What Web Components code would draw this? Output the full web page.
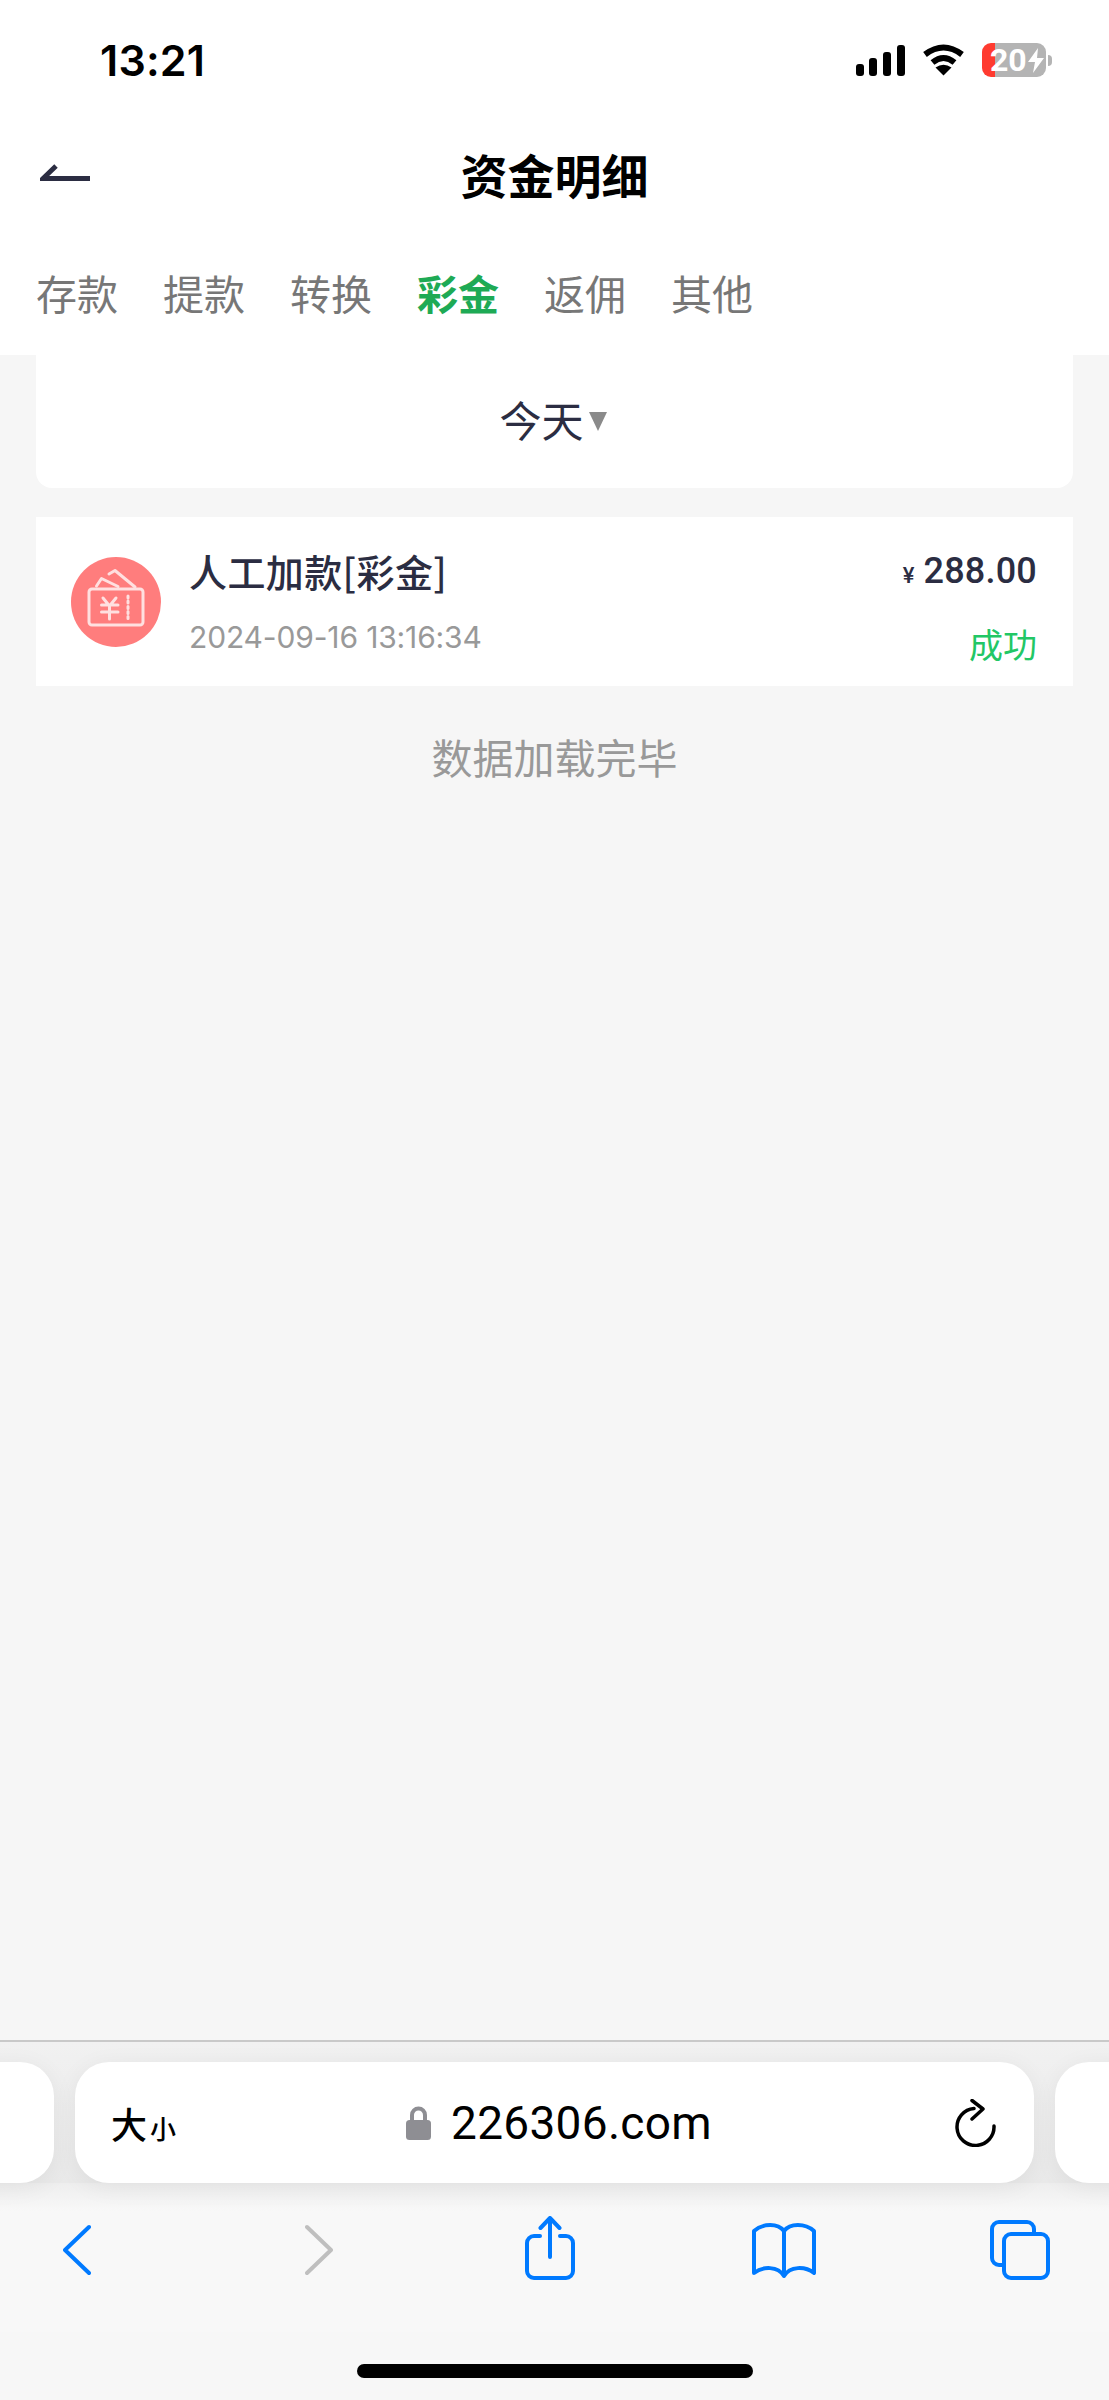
<!DOCTYPE html>
<html lang="zh">
<head>
<meta charset="utf-8">
<title>资金明细</title>
<style>
  html, body { margin: 0; padding: 0; }
  body {
    width: 1109px;
    height: 2400px;
    display: flex;
    flex-direction: column;
    overflow: hidden;
    background: #f6f6f6;
    font-family: Inter, "Noto Sans CJK SC", sans-serif;
  }
  main-list { flex: 1; }
</style>
</head>
<body>
  <status-bar time="13:21" battery="20"></status-bar>
  <nav-header>资金明细</nav-header>
  <tab-strip active="3" items="存款,提款,转换,彩金,返佣,其他"></tab-strip>
  <main-list>
    <date-filter>今天</date-filter>
    <txn-row title="人工加款[彩金]" date="2024-09-16 13:16:34" amount="288.00" state="成功"></txn-row>
    <end-note>数据加载完毕</end-note>
  </main-list>
  <safari-bar host-name="226306.com"></safari-bar>

<script>
class StatusBar extends HTMLElement {
  connectedCallback() {
    this.attachShadow({ mode: "open" });
    this.shadowRoot.innerHTML = /*html*/ `
      <style>
        :host { display: flex; align-items: center; height: 120px; background: #fff; color: #000; }
        .time { margin-left: 100px; font: 600 43px/1 Inter, sans-serif; letter-spacing: 0.2px; }
        .right { margin-left: auto; margin-right: 57px; display: flex; align-items: center; }
        svg { display: block; }
        .wifi { margin-left: 17px; }
        .battery {
          margin-left: 17px; width: 64px; height: 34px; border-radius: 9px;
          display: flex; align-items: center; color: #fff;
          background: linear-gradient(90deg, #ff3b30 0 13px, #b4b4b4 13px);
          font: 700 32px/34px Roboto, sans-serif;
        }
        .battery span { margin-left: 8px; }
        .nub { width: 4px; height: 11px; margin-left: 2px; background: #b4b4b4; border-radius: 0 4px 4px 0; }
      </style>
      <div class="time">${this.getAttribute("time")}</div>
      <div class="right">
        <svg width="50" height="31" viewBox="0 0 50 31" fill="#000">
          <rect x="1" y="19" width="8" height="12" rx="3"/>
          <rect x="14" y="13" width="8" height="18" rx="3"/>
          <rect x="28" y="7" width="8" height="24" rx="3"/>
          <rect x="42" y="0" width="8" height="31" rx="3"/>
        </svg>
        <svg class="wifi" width="43" height="32" viewBox="0 0 43 32">
          <path d="M3 10.500Q21.500 -3.500 40 10.500M10.500 18.500Q21.500 9.500 32.500 18.500" fill="none" stroke="#000" stroke-width="6"/>
          <path d="M21.500 31.500L13.500 23.500Q21.500 18 29.500 23.500Z" fill="#000"/>
        </svg>
        <div class="battery">
          <span>${this.getAttribute("battery")}</span>
          <svg width="16" height="25" viewBox="0 0 16 25" style="margin-left:1px"><path d="M10 0L0 14H7L5 25L16 10H9Z" fill="#fff"/></svg>
        </div>
        <div class="nub"></div>
      </div>
    `;
  }
}

class NavHeader extends HTMLElement {
  connectedCallback() {
    this.attachShadow({ mode: "open" });
    this.shadowRoot.innerHTML = /*html*/ `
      <style>
        :host {
          display: grid; grid-template-columns: 1fr auto 1fr; align-items: center;
          height: 112px; box-sizing: border-box; padding-bottom: 6px; background: #fff;
        }
        .title { font: 700 47px/1 "Noto Sans CJK SC", sans-serif; color: #000; }
        svg { display: block; margin: 2px 0 0 40px; }
      </style>
      <svg width="52" height="20" viewBox="0 0 52 20">
        <path d="M16 2L3 14.500H50" fill="none" stroke="#2b2d42" stroke-width="5"/>
      </svg>
      <div class="title"><slot></slot></div>
      <div></div>
    `;
  }
}

class TabStrip extends HTMLElement {
  connectedCallback() {
    this.attachShadow({ mode: "open" });
    const active = Number(this.getAttribute("active"));
    const tabs = this.getAttribute("items").split(",")
      .map((t, i) => `<div class="tab ${i === active ? "on" : ""}">${t}</div>`).join("");
    this.shadowRoot.innerHTML = /*html*/ `
      <style>
        :host {
          display: flex; align-items: center; gap: 45px; height: 123px; box-sizing: border-box;
          padding: 0 0 3px 36px; background: #fff;
        }
        .tab { font: 400 41px/1 "Noto Sans CJK SC", sans-serif; color: #777; }
        .on { color: #1eaa55; font-weight: 700; }
      </style>
      ${tabs}
    `;
  }
}

class MainList extends HTMLElement {
  connectedCallback() {
    this.attachShadow({ mode: "open" });
    this.shadowRoot.innerHTML = /*html*/ `
      <style>
        :host { display: block; }
      </style>
      <slot></slot>
    `;
  }
}

class DateFilter extends HTMLElement {
  connectedCallback() {
    this.attachShadow({ mode: "open" });
    this.shadowRoot.innerHTML = /*html*/ `
      <style>
        :host {
          display: flex; align-items: center; justify-content: center; gap: 5px;
          height: 133px; box-sizing: border-box; padding: 0 3px 6px 0; margin: 0 36px;
          background: #fff; border-radius: 0 0 16px 16px;
          font: 400 42px/1 "Noto Sans CJK SC", sans-serif; color: #2b2d42;
        }
        svg { display: block; margin-top: 6px; }
      </style>
      <slot></slot>
      <svg width="18" height="19" viewBox="0 0 18 19"><path d="M0 0H18L9 19Z" fill="#8a8a8a"/></svg>
    `;
  }
}

class TxnRow extends HTMLElement {
  connectedCallback() {
    this.attachShadow({ mode: "open" });
    this.shadowRoot.innerHTML = /*html*/ `
      <style>
        :host {
          display: flex; align-items: center; height: 169px; margin: 29px 36px 0; padding: 0 36px 0 35px;
          background: #fff; font-family: "Noto Sans CJK SC", sans-serif;
        }
        svg.icon { display: block; flex: none; margin-right: 28px; }
        .left { flex: 1; padding-bottom: 3px; }
        .title { font-size: 38px; line-height: 50px; font-weight: 500; color: #2b2d42; letter-spacing: 0.4px; }
        .date { margin-top: 24px; font: 400 30px/34px Inter, sans-serif; color: #999; letter-spacing: -0.15px; }
        .right { text-align: right; padding-top: 11px; }
        .amount { font: 500 36px/40px Roboto, sans-serif; color: #2b2d42; letter-spacing: 0.2px; }
        .amount small { font-size: 22px; margin-right: 9px; letter-spacing: 0; }
        .state { margin-top: 28px; font-size: 34px; line-height: 40px; color: #22c765; }
      </style>
      <svg class="icon" width="90" height="90" viewBox="0 0 90 90">
        <circle cx="45" cy="45" r="45" fill="#ff7d7d"/>
        <g fill="none" stroke="#ffe0e0" stroke-width="3" stroke-linecap="round" stroke-linejoin="round">
          <rect x="18" y="32" width="54" height="36" rx="3"/>
          <path d="M25.500 29L30.500 21.500L47 29.500M38 17L44 13.500L64 30"/>
          <path d="M32 41L38.500 49L45 41M30.500 48H47M30.500 55H47M38.500 49V62"/>
          <path d="M57 39V41M57 44V46M57 49.500V51.500M57 54.500V56.500M57 59.500V61.500"/>
        </g>
      </svg>
      <div class="left">
        <div class="title">${this.getAttribute("title")}</div>
        <div class="date">${this.getAttribute("date")}</div>
      </div>
      <div class="right">
        <div class="amount"><small>¥</small>${this.getAttribute("amount")}</div>
        <div class="state">${this.getAttribute("state")}</div>
      </div>
    `;
  }
}

class EndNote extends HTMLElement {
  connectedCallback() {
    this.attachShadow({ mode: "open" });
    this.shadowRoot.innerHTML = /*html*/ `
      <style>
        :host {
          display: block; margin-top: 42px; text-align: center;
          font: 400 41px/56px "Noto Sans CJK SC", sans-serif; color: #999;
        }
      </style>
      <slot></slot>
    `;
  }
}

class SafariBar extends HTMLElement {
  connectedCallback() {
    this.attachShadow({ mode: "open" });
    this.shadowRoot.innerHTML = /*html*/ `
      <style>
        :host {
          display: block; height: 360px; box-sizing: border-box; overflow: hidden;
          border-top: 2px solid #c9c9c9; background: #f7f7f7; color: #000;
        }
        .pills { display: flex; justify-content: center; gap: 21px; padding-top: 20px; height: 121px; background: linear-gradient(#f1f1f1, #e9e9e9); }
        .pill { flex: none; width: 200px; height: 121px; background: #fff; border-radius: 34px; box-shadow: 0 4px 24px rgba(0,0,0,.06); }
        .url { width: 959px; display: flex; align-items: center; padding: 0 38px 0 36px; box-sizing: border-box; }
        .size { display: flex; align-items: flex-end; width: 120px; font-family: "Noto Sans CJK SC", sans-serif; line-height: 1; }
        .size b { font-size: 36px; font-weight: 500; }
        .size i { font-style: normal; font-size: 26px; font-weight: 500; margin-left: 3px; }
        .host { flex: 1; display: flex; align-items: center; gap: 20px; margin-left: 175px; font: 400 46px/1 Roboto, sans-serif; letter-spacing: 0.3px; }
        .tools {
          display: flex; padding: 33px 0 0 63px; height: 116px;
          background: linear-gradient(#eeeeee, #f8f8f8 28px);
        }
        .tools svg { display: block; flex: none; }
        .home { width: 396px; height: 14px; margin: 32px auto 0; border-radius: 7px; background: #000; }
      </style>
      <div class="pills">
        <div class="pill"></div>
        <div class="pill url">
          <div class="size"><b>大</b><i>小</i></div>
          <div class="host">
            <svg width="25" height="34" viewBox="0 0 25 34"><path d="M6 15V9a6.500 6.500 0 0 1 13 0v6" fill="none" stroke="#8e8e93" stroke-width="4"/><rect y="14" width="25" height="20" rx="3.500" fill="#8e8e93"/></svg>
            <span>${this.getAttribute("host-name")}</span>
          </div>
          <svg width="41" height="48" viewBox="0 0 41 48" fill="none" stroke="#000" stroke-width="3.500" stroke-linecap="round" stroke-linejoin="round">
            <path d="M19 9.500A18.500 18.500 0 1 0 39 27"/>
            <path d="M17 1.500L28 10L17 20"/>
          </svg>
        </div>
        <div class="pill"></div>
      </div>
      <div class="tools">
        <svg width="28" height="70" viewBox="0 0 28 70" fill="none" stroke="#007aff" stroke-width="4" stroke-linecap="round" stroke-linejoin="round"><path d="M26 11L2 34L26 57"/></svg>
        <svg style="margin-left:214px" width="28" height="70" viewBox="0 0 28 70" fill="none" stroke="#bfbfbf" stroke-width="4" stroke-linecap="round" stroke-linejoin="round"><path d="M2 11L26 34L2 57"/></svg>
        <svg style="margin-left:192px" width="50" height="70" viewBox="0 0 50 70" fill="none" stroke="#007aff" stroke-width="4" stroke-linecap="round" stroke-linejoin="round">
          <path d="M15 20H9a7 7 0 0 0-7 7V55a7 7 0 0 0 7 7H41a7 7 0 0 0 7-7V27a7 7 0 0 0-7-7H35"/>
          <path d="M25 41V2M15.500 12L25 2L34.500 12"/>
        </svg>
        <svg style="margin-left:177px" width="64" height="70" viewBox="0 0 64 70" fill="none" stroke="#007aff" stroke-width="4" stroke-linecap="round" stroke-linejoin="round">
          <path d="M32 15C26 7 11 7 2 15V57C11 50 26 50 32 60C38 50 53 50 62 57V15C53 7 38 7 32 15V60"/>
        </svg>
        <svg style="margin-left:174px" width="60" height="70" viewBox="0 0 60 70" fill="none" stroke="#007aff" stroke-width="4" stroke-linejoin="round">
          <path d="M44 17V13a7 7 0 0 0-7-7H9a7 7 0 0 0-7 7V42a7 7 0 0 0 7 7H14"/>
          <rect x="14" y="18" width="44" height="44" rx="7"/>
        </svg>
      </div>
      <div class="home"></div>
    `;
  }
}

customElements.define("status-bar", StatusBar);
customElements.define("nav-header", NavHeader);
customElements.define("tab-strip", TabStrip);
customElements.define("main-list", MainList);
customElements.define("date-filter", DateFilter);
customElements.define("txn-row", TxnRow);
customElements.define("end-note", EndNote);
customElements.define("safari-bar", SafariBar);
</script>
</body>
</html>
